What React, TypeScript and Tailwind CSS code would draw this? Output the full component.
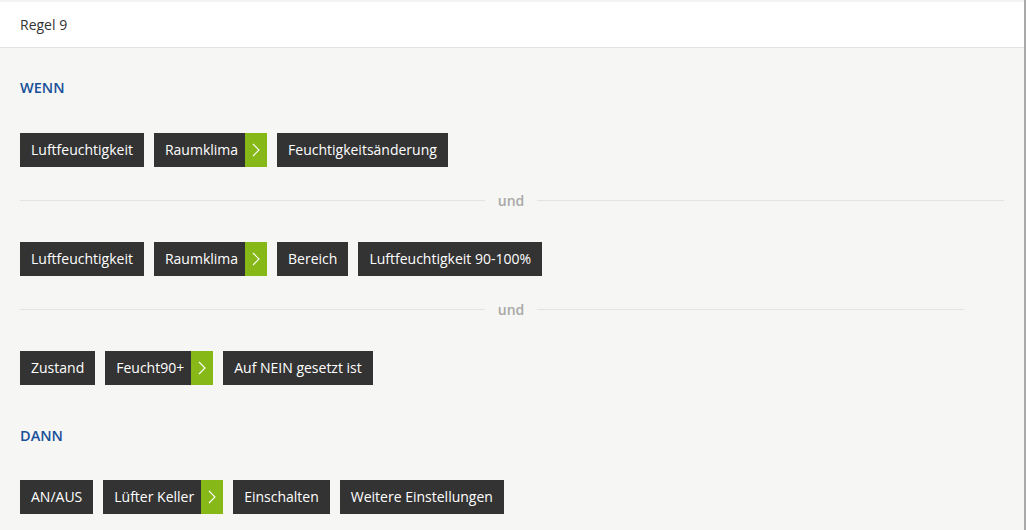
import React from "react";

const Chip = ({ label, arrow }: { label: string; arrow?: boolean }) => (
  <div className="flex h-[34px] bg-[#333333] text-white">
    <span
      className={`flex items-center text-[14px] leading-none ${arrow ? "pl-[11px] pr-[7px]" : "px-[11px]"}`}
    >
      {label}
    </span>
    {arrow && (
      <span className="flex w-[22px] items-center justify-center bg-[#86b817]">
        <svg width="8" height="14" viewBox="0 0 8 14" fill="none">
          <path d="M1 1l6 6-6 6" stroke="white" strokeWidth="1.1" />
        </svg>
      </span>
    )}
  </div>
);

const Row = ({ children }: { children: React.ReactNode }) => (
  <div className="flex gap-[10px]">{children}</div>
);

const Sep = ({ right }: { right: string }) => (
  <div className="flex h-[20px] items-center">
    <div className="h-px w-[465px] bg-[#e3e3e1]" />
    <span className="w-[52px] text-center text-[14px] font-semibold text-[#a8a8a8]">und</span>
    <div className={`h-px bg-[#e3e3e1] ${right}`} />
  </div>
);

export default function App() {
  return (
    <div
      className="flex h-[530px] w-[1026px] overflow-hidden bg-[#f6f6f4]"
      style={{ fontFamily: '"Open Sans", sans-serif' }}
    >
      <div className="flex flex-1 flex-col">
        <div className="h-[2px] bg-[#f3f3f3]" />
        <div className="flex h-[46px] items-center border-b border-[#e2e2e0] bg-white px-[20px] text-[14px] text-[#333]">
          Regel 9
        </div>
        <div className="flex flex-col px-[20px]">
          <div className="mt-[30px] h-[20px] text-[14.5px] font-semibold leading-[20px] text-[#18509a]">WENN</div>
          <div className="mt-[35px]">
            <Row>
              <Chip label="Luftfeuchtigkeit" />
              <Chip label="Raumklima" arrow />
              <Chip label="Feuchtigkeitsänderung" />
            </Row>
          </div>
          <div className="mt-[23px]">
            <Sep right="w-[467px]" />
          </div>
          <div className="mt-[32px]">
            <Row>
              <Chip label="Luftfeuchtigkeit" />
              <Chip label="Raumklima" arrow />
              <Chip label="Bereich" />
              <Chip label="Luftfeuchtigkeit 90-100%" />
            </Row>
          </div>
          <div className="mt-[23px]">
            <Sep right="w-[427px]" />
          </div>
          <div className="mt-[32px]">
            <Row>
              <Chip label="Zustand" />
              <Chip label="Feucht90+" arrow />
              <Chip label="Auf NEIN gesetzt ist" />
            </Row>
          </div>
          <div className="mt-[41px] h-[20px] text-[14.5px] font-semibold leading-[20px] text-[#18509a]">DANN</div>
          <div className="mt-[34px]">
            <Row>
              <Chip label="AN/AUS" />
              <Chip label="Lüfter Keller" arrow />
              <Chip label="Einschalten" />
              <Chip label="Weitere Einstellungen" />
            </Row>
          </div>
        </div>
      </div>
      <div className="w-[3px] bg-[#a9a9a9]" />
    </div>
  );
}
